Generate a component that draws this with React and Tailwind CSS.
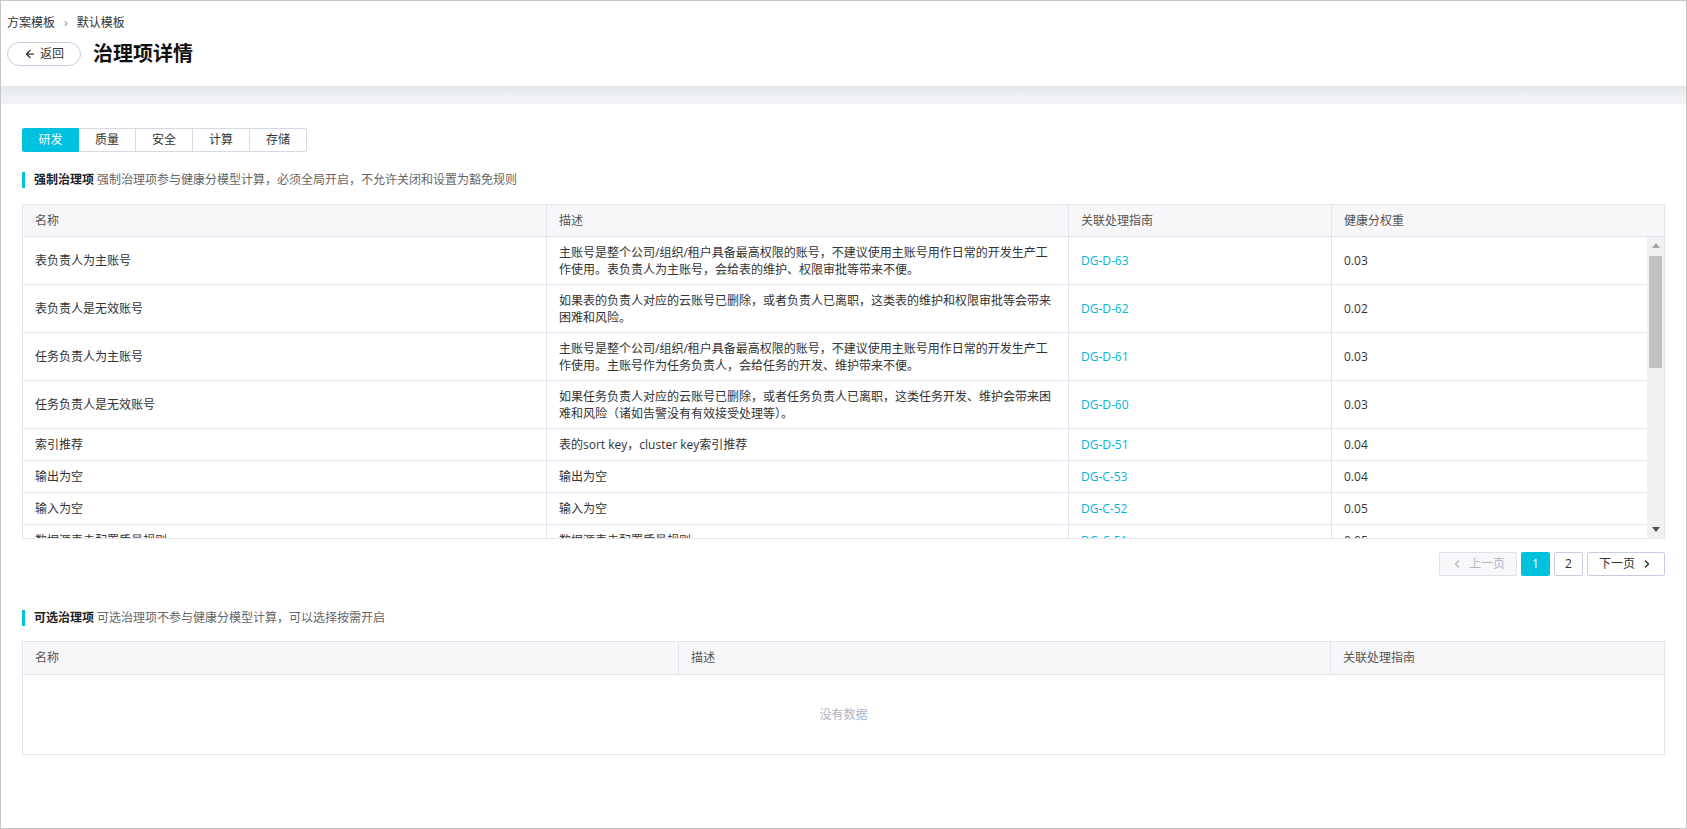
import React from 'react';
import { ArrowLeft, ChevronLeft, ChevronRight } from 'lucide-react';

const rows = [
  { name: '表负责人为主账号', desc: '主账号是整个公司/组织/租户具备最高权限的账号，不建议使用主账号用作日常的开发生产工作使用。表负责人为主账号，会给表的维护、权限审批等带来不便。', guide: 'DG-D-63', weight: '0.03', tall: true },
  { name: '表负责人是无效账号', desc: '如果表的负责人对应的云账号已删除，或者负责人已离职，这类表的维护和权限审批等会带来困难和风险。', guide: 'DG-D-62', weight: '0.02', tall: true },
  { name: '任务负责人为主账号', desc: '主账号是整个公司/组织/租户具备最高权限的账号，不建议使用主账号用作日常的开发生产工作使用。主账号作为任务负责人，会给任务的开发、维护带来不便。', guide: 'DG-D-61', weight: '0.03', tall: true },
  { name: '任务负责人是无效账号', desc: '如果任务负责人对应的云账号已删除，或者任务负责人已离职，这类任务开发、维护会带来困难和风险（诸如告警没有有效接受处理等）。', guide: 'DG-D-60', weight: '0.03', tall: true },
  { name: '索引推荐', desc: '表的sort key，cluster key索引推荐', guide: 'DG-D-51', weight: '0.04' },
  { name: '输出为空', desc: '输出为空', guide: 'DG-C-53', weight: '0.04' },
  { name: '输入为空', desc: '输入为空', guide: 'DG-C-52', weight: '0.05' },
  { name: '数据源表未配置质量规则', desc: '数据源表未配置质量规则', guide: 'DG-C-51', weight: '0.05' },
  { name: '表未设置生命周期', desc: '表未设置生命周期', guide: 'DG-C-50', weight: '0.05' },
];

const tabs = ['研发', '质量', '安全', '计算', '存储'];

function SectionTitle({ title, desc }) {
  return (
    <div className="flex items-center h-[16px]">
      <div className="w-[3px] h-[16px] bg-[#00c1de]" />
      <span className="ml-[9px] text-[12px] leading-[16px] font-bold text-[#222]">{title}</span>
      <span className="ml-[3px] text-[12px] leading-[16px] text-[#666]">{desc}</span>
    </div>
  );
}

// classic scrollbar drawn beside the table body
function ScrollBar() {
  return (
    <div className="w-[17px] shrink-0 bg-[#f1f1f1] flex flex-col items-center">
      <div className="h-[17px] w-full flex items-center justify-center">
        <svg width="8" height="5" viewBox="0 0 8 5"><path d="M4 0L8 5H0z" fill="#a3a3a3" /></svg>
      </div>
      <div className="mt-[2px] w-[13px] h-[112px] bg-[#c1c1c1]" />
      <div className="flex-1" />
      <div className="h-[17px] w-full flex items-center justify-center">
        <svg width="8" height="5" viewBox="0 0 8 5"><path d="M0 0H8L4 5z" fill="#505050" /></svg>
      </div>
    </div>
  );
}

export default function App() {
  return (
    <div className="h-[829px] border border-[#c6c6c6] bg-white overflow-hidden text-[#333] font-['Open_Sans','Noto_Sans_CJK_SC',sans-serif]">
      {/* page header */}
      <header className="h-[85px] px-[6px] pt-[14px]">
        <div className="flex items-center h-[16px] text-[12px] leading-[16px] text-[#333]">
          <span>方案模板</span>
          <span className="mx-[9px] text-[#888] text-[12px]">›</span>
          <span>默认模板</span>
        </div>
        <div className="mt-[11px] flex items-center">
          <button className="w-[74px] h-[24px] rounded-full border border-[#c9cbe0] flex items-center justify-center gap-[4px] text-[12px] text-[#333] bg-white">
            <ArrowLeft size={12} strokeWidth={2.5} />
            返回
          </button>
          <h1 className="ml-[12px] text-[20px] leading-[24px] font-bold text-[#111]">治理项详情</h1>
        </div>
      </header>
      <div className="h-[18px] bg-gradient-to-b from-[#e3e6eb] via-[#eef0f3] to-[#f1f3f6]" />

      <main className="px-[21px] pt-[24px]">
        {/* tabs */}
        <div className="flex">
          {tabs.map((t, i) => (
            <div
              key={t}
              className={
                i === 0
                  ? 'w-[57px] h-[24px] flex items-center justify-center text-[12px] bg-[#00c1de] text-white border border-[#00c1de] rounded-l-[2px]'
                  : 'w-[57px] h-[24px] flex items-center justify-center text-[12px] text-[#333] border border-l-0 border-[#d7d8e6] bg-white last:rounded-r-[2px]'
              }
            >
              {t}
            </div>
          ))}
        </div>

        <div className="mt-[20px]">
          <SectionTitle title="强制治理项" desc="强制治理项参与健康分模型计算，必须全局开启，不允许关闭和设置为豁免规则" />
        </div>

        {/* table 1 */}
        <div className="mt-[16px] border border-[#e3e4ef] text-[12px]">
          <div className="grid grid-cols-[524px_522px_263px_1fr] h-[32px] bg-[#f7f7f9] border-b border-[#e3e4ef] text-[#555]">
            <div className="px-3 flex items-center border-r border-[#e3e4ef]">名称</div>
            <div className="px-3 flex items-center border-r border-[#e3e4ef]">描述</div>
            <div className="px-3 flex items-center border-r border-[#e3e4ef]">关联处理指南</div>
            <div className="px-3 flex items-center">健康分权重</div>
          </div>
          <div className="flex h-[301px]">
            <div className="flex-1 overflow-hidden">
              {rows.map((r) => (
                <div
                  key={r.guide + r.name}
                  className={
                    (r.tall ? 'h-[48px] ' : 'h-[32px] ') +
                    'grid grid-cols-[524px_522px_263px_1fr] border-b border-[#e3e4ef] leading-[17px]'
                  }
                >
                  <div className="px-3 flex items-center border-r border-[#e3e4ef]">{r.name}</div>
                  <div className="px-3 flex items-center border-r border-[#e3e4ef]">
                    <span className="w-[498px]">{r.desc}</span>
                  </div>
                  <div className="px-3 flex items-center border-r border-[#e3e4ef] text-[#00b7d6]">{r.guide}</div>
                  <div className="px-3 flex items-center">{r.weight}</div>
                </div>
              ))}
            </div>
            <ScrollBar />
          </div>
        </div>

        {/* pagination */}
        <div className="mt-[13px] flex justify-end gap-[4px] text-[12px]">
          <button className="w-[78px] h-[24px] flex items-center justify-center gap-[6px] border border-[#dfe0ea] bg-[#f7f7fa] text-[#b4b6c8] rounded-[2px]">
            <ChevronLeft size={12} strokeWidth={3} />
            上一页
          </button>
          <button className="w-[29px] h-[24px] flex items-center justify-center bg-[#00c1de] text-white rounded-[2px]">1</button>
          <button className="w-[29px] h-[24px] flex items-center justify-center border border-[#c9cbe0] text-[#333] bg-white rounded-[2px]">2</button>
          <button className="w-[78px] h-[24px] flex items-center justify-center gap-[6px] border border-[#c9cbe0] text-[#333] bg-white rounded-[2px]">
            下一页
            <ChevronRight size={12} strokeWidth={3} />
          </button>
        </div>

        <div className="mt-[34px]">
          <SectionTitle title="可选治理项" desc="可选治理项不参与健康分模型计算，可以选择按需开启" />
        </div>

        {/* table 2 */}
        <div className="mt-[15px] border border-[#e3e4ef] text-[12px]">
          <div className="grid grid-cols-[656px_652px_1fr] h-[33px] bg-[#f7f7f9] border-b border-[#e3e4ef] text-[#555]">
            <div className="px-3 flex items-center border-r border-[#e3e4ef]">名称</div>
            <div className="px-3 flex items-center border-r border-[#e3e4ef]">描述</div>
            <div className="px-3 flex items-center">关联处理指南</div>
          </div>
          <div className="h-[79px] flex items-center justify-center text-[#b0b2c6]">没有数据</div>
        </div>
      </main>
    </div>
  );
}
